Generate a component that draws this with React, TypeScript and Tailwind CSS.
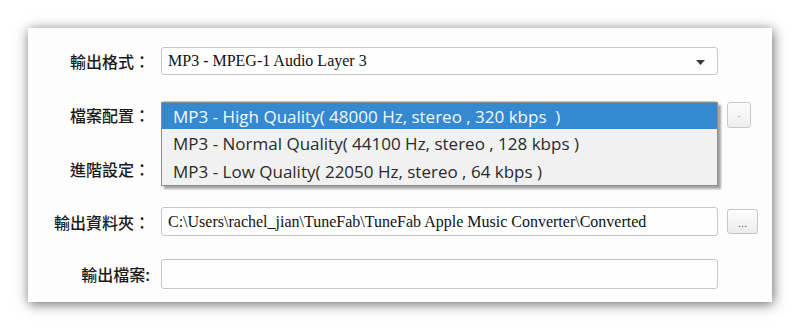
import React from "react";

const labelCls =
  "w-[124px] shrink-0 pr-[2px] text-right text-[16px] font-medium leading-none text-[#1a1a1a] [font-family:'Noto_Sans_CJK_TC','Noto_Sans_CJK_SC',sans-serif]";
const fieldCls =
  "w-[557px] shrink-0 rounded-[3px] border border-[#c6c6c6] bg-[#fefefe] flex items-center pl-[6px] text-[16px] leading-none text-[#111] [font-family:'Liberation_Serif',serif] whitespace-nowrap overflow-hidden";

export default function App() {
  const options = [
    "MP3 - High Quality( 48000 Hz, stereo , 320 kbps\u00a0 )",
    "MP3 - Normal Quality( 44100 Hz, stereo , 128 kbps )",
    "MP3 - Low Quality( 22050 Hz, stereo , 64 kbps )",
  ];
  return (
    <div className="w-[800px] h-[331px] bg-white p-[28px] box-border">
      <div className="w-[744px] h-[274px] bg-[#fdfdfd] shadow-[1px_2px_12px_rgba(0,0,0,0.6)] pt-[19px] flex flex-col">
        {/* Row 1 */}
        <div className="flex items-center h-[28px] gap-[9px]">
          <div className={labelCls}>輸出格式：</div>
          <div className={`${fieldCls} h-[28px] relative`}>
            MP3 - MPEG-1 Audio Layer 3
            <svg
              className="absolute right-[12px] top-[12px]"
              width="9"
              height="5"
              viewBox="0 0 9 5"
            >
              <path d="M0 0 L9 0 L4.5 5 Z" fill="#3a3a3a" />
            </svg>
          </div>
        </div>

        {/* Row 2 */}
        <div className="flex items-center h-[28px] gap-[9px] mt-[26px]">
          <div className={labelCls}>檔案配置：</div>
          <div className="relative w-[557px] h-[28px] shrink-0">
            <div className={`${fieldCls} h-[28px]`} />
            <div className="absolute left-0 top-[1px] w-[557px] z-10 border border-[#8c8c8c] bg-[#f1f1f1] shadow-[3px_3px_2px_rgba(0,0,0,0.35)] [font-family:'Open_Sans',sans-serif] text-[17px] leading-none">
              {options.map((o, i) => (
                <div
                  key={i}
                  className={
                    i === 0
                      ? "h-[26px] flex items-center pl-[11px] bg-[#3589d0] text-[#f4f8fc] whitespace-nowrap"
                      : "h-[28px] flex items-center pl-[11px] text-[#2a2a2a] whitespace-nowrap"
                  }
                >
                  {o}
                </div>
              ))}
            </div>
          </div>
          <button className="w-[24px] h-[26px] rounded-[3px] border border-[#cacaca] bg-gradient-to-b from-[#fdfdfd] to-[#eeeeee] text-[9px] text-[#999] leading-none flex items-center justify-center">
            -
          </button>
        </div>

        {/* Row 3 */}
        <div className="flex items-center h-[28px] gap-[9px] mt-[26px]">
          <div className={labelCls}>進階設定：</div>
          <div className={`${fieldCls} h-[28px]`} />
        </div>

        {/* Row 4 */}
        <div className="flex items-center h-[29px] gap-[9px] mt-[24px]">
          <div className={labelCls}>輸出資料夾：</div>
          <div className={`${fieldCls} h-[29px]`}>
            C:\Users\rachel_jian\TuneFab\TuneFab Apple Music Converter\Converted
          </div>
          <button className="w-[31px] h-[25px] rounded-[3px] border border-[#c6c6c6] bg-gradient-to-b from-[#fdfdfd] to-[#ececec] text-[11px] text-[#555] leading-none flex items-center justify-center pt-[4px] [font-family:'Liberation_Sans',sans-serif]">
            ...
          </button>
        </div>

        {/* Row 5 */}
        <div className="flex items-center h-[30px] gap-[9px] mt-[23px]">
          <div className={labelCls}>輸出檔案:</div>
          <div className={`${fieldCls} h-[30px]`} />
        </div>
      </div>
    </div>
  );
}
